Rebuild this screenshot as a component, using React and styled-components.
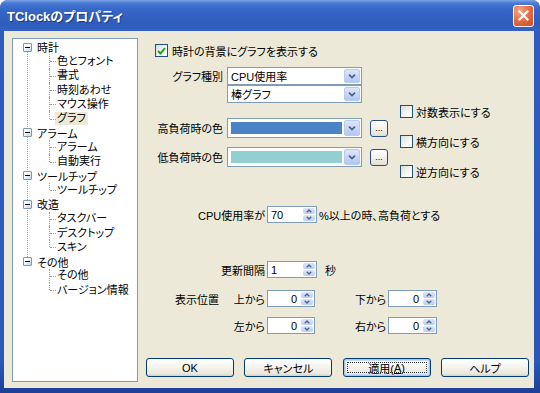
import styled, { createGlobalStyle } from "styled-components"

const GlobalStyle = createGlobalStyle`
  html, body { margin: 0; padding: 0; background: #fff; }
  body {
    font-family: "Liberation Sans", "Noto Sans CJK JP", sans-serif;
    font-size: 11px;
    color: #000;
    font-feature-settings: "palt";
  }
  * { box-sizing: border-box; }
`

const tree = [
  { label: "時計", children: ["色とフォント", "書式", "時刻あわせ", "マウス操作", "グラフ"] },
  { label: "アラーム", children: ["アラーム", "自動実行"] },
  { label: "ツールチップ", children: ["ツールチップ"] },
  { label: "改造", children: ["タスクバー", "デスクトップ", "スキン"] },
  { label: "その他", children: ["その他", "バージョン情報"] },
]

const Chevron = () => (
  <svg width="8" height="5" viewBox="0 0 8 5">
    <path d="M1 0.6 L4 3.6 L7 0.6" fill="none" stroke="#4d6185" strokeWidth="1.7" />
  </svg>
)

const SpinArrow = ({ up }) => (
  <svg width="6" height="4" viewBox="0 0 6 4">
    <path d={up ? "M0.8 3.3 L3 1 L5.2 3.3" : "M0.8 0.7 L3 3 L5.2 0.7"} fill="none" stroke="#4d6185" strokeWidth="1.3" />
  </svg>
)

export default function App() {
  return (
    <>
      <GlobalStyle />
      <Window>
        <TitleBar>
          <Title>TClockのプロパティ</Title>
          <CloseButton>
            <svg width="11" height="11" viewBox="0 0 11 11">
              <path d="M1.5 1.5 L9.5 9.5 M9.5 1.5 L1.5 9.5" stroke="#fff" strokeWidth="2.2" strokeLinecap="square" />
            </svg>
          </CloseButton>
        </TitleBar>
        <Body>
          <TreePanel>
            {tree.map((g, gi) => (
              <TreeGroup key={g.label + gi} $last={gi === tree.length - 1}>
                <ParentRow>
                  <Expander />
                  <span>{g.label}</span>
                </ParentRow>
                {g.children.map((c, ci) => (
                  <ChildRow key={c + ci} $last={ci === g.children.length - 1}>
                    <ItemLabel $selected={c === "グラフ"}>{c}</ItemLabel>
                  </ChildRow>
                ))}
              </TreeGroup>
            ))}
          </TreePanel>

          <Main>
            <CheckRow>
              <CheckBox $checked>
                <svg width="9" height="8" viewBox="0 0 9 8">
                  <path d="M1 4 L3.5 6.5 L8 1.2" fill="none" stroke="#21a121" strokeWidth="2" />
                </svg>
              </CheckBox>
              <span>時計の背景にグラフを表示する</span>
            </CheckRow>

            <FieldArea>
              <FieldGrid>
                <FieldRow $h={18} $mt={0}>
                  <FieldLabel>グラフ種別</FieldLabel>
                  <Combo>
                    <ComboText>CPU使用率</ComboText>
                    <ComboButton><Chevron /></ComboButton>
                  </Combo>
                </FieldRow>
                <FieldRow $h={18} $mt={0}>
                  <FieldLabel />
                  <Combo>
                    <ComboText>棒グラフ</ComboText>
                    <ComboButton><Chevron /></ComboButton>
                  </Combo>
                </FieldRow>
                <FieldRow $h={20} $mt={15}>
                  <FieldLabel>高負荷時の色</FieldLabel>
                  <Combo>
                    <Swatch $color="#4a84c6" />
                    <ComboButton><Chevron /></ComboButton>
                  </Combo>
                  <DotsButton>...</DotsButton>
                </FieldRow>
                <FieldRow $h={20} $mt={9}>
                  <FieldLabel>低負荷時の色</FieldLabel>
                  <Combo>
                    <Swatch $color="#93cfd1" />
                    <ComboButton><Chevron /></ComboButton>
                  </Combo>
                  <DotsButton>...</DotsButton>
                </FieldRow>
              </FieldGrid>

              <SideChecks>
                {["対数表示にする", "横方向にする", "逆方向にする"].map((t) => (
                  <SideCheck key={t}>
                    <CheckBox />
                    <span>{t}</span>
                  </SideCheck>
                ))}
              </SideChecks>
            </FieldArea>

            <SpinRow $mt={28}>
              <SpinLabel>CPU使用率が</SpinLabel>
              <Spin $w={50}>
                <SpinValue>70</SpinValue>
                <SpinButtons>
                  <SpinHalf><SpinArrow up /></SpinHalf>
                  <SpinHalf><SpinArrow /></SpinHalf>
                </SpinButtons>
              </Spin>
              <Suffix $ml={2}>%以上の時、高負荷とする</Suffix>
            </SpinRow>

            <SpinRow $mt={38}>
              <SpinLabel>更新間隔</SpinLabel>
              <Spin $w={50}>
                <SpinValue>1</SpinValue>
                <SpinButtons>
                  <SpinHalf><SpinArrow up /></SpinHalf>
                  <SpinHalf><SpinArrow /></SpinHalf>
                </SpinButtons>
              </Spin>
              <Suffix $ml={8}>秒</Suffix>
            </SpinRow>

            <PositionGrid>
              <GroupLabel>表示位置</GroupLabel>
              <PosLabel>上から</PosLabel>
              <PosSpin />
              <span />
              <PosLabel>下から</PosLabel>
              <PosSpin $w={49} />
              <span />
              <PosLabel>左から</PosLabel>
              <PosSpin />
              <span />
              <PosLabel>右から</PosLabel>
              <PosSpin $w={49} />
            </PositionGrid>

            <ButtonBar>
              <PushButton>OK</PushButton>
              <PushButton>キャンセル</PushButton>
              <PushButton $focused>適用(<u>A</u>)</PushButton>
              <PushButton>ヘルプ</PushButton>
            </ButtonBar>
          </Main>
        </Body>
      </Window>
    </>
  )
}

function PosSpin({ $w = 48 }) {
  return (
    <Spin $w={$w}>
      <SpinValue $right>0</SpinValue>
      <SpinButtons>
        <SpinHalf><SpinArrow up /></SpinHalf>
        <SpinHalf><SpinArrow /></SpinHalf>
      </SpinButtons>
    </Spin>
  )
}

const Window = styled.div`
  width: 540px;
  height: 393px;
  display: flex;
  flex-direction: column;
  background: linear-gradient(to bottom, #2f5ec0, #2b57b7 92%, #1d3f96);
  border-radius: 8px 8px 0 0;
  overflow: hidden;
`

const TitleBar = styled.div`
  flex: none;
  height: 31px;
  display: flex;
  align-items: center;
  justify-content: space-between;
  padding: 0 6px 0 7px;
  background: linear-gradient(to bottom, #7ea4e6 0%, #4a7ad5 10%, #3666c7 30%, #2f5dbe 75%, #3461c2 100%);
`

const Title = styled.span`
  color: #fff;
  font-weight: bold;
  font-size: 13px;
  text-shadow: 1px 1px 0 #1a3a82;
`

const CloseButton = styled.div`
  width: 21px;
  height: 22px;
  border: 1px solid #fff;
  border-radius: 3px;
  background: radial-gradient(circle at 30% 25%, #f3a888, #e2663f 55%, #cc4a22);
  display: flex;
  align-items: center;
  justify-content: center;
`

const Body = styled.div`
  flex: 1;
  margin: 0 6px 5px 4px;
  background: #ece9d8;
  display: flex;
  gap: 8px;
  padding: 7px 5px 6px 8px;
`

const TreePanel = styled.div`
  flex: none;
  width: 126px;
  background: #fff;
  border: 1px solid #7f9db9;
  padding-top: 1px;
`

const TreeGroup = styled.div`
  position: relative;

  &::before {
    content: "";
    display: ${(p) => (p.$last ? "none" : "block")};
    position: absolute;
    left: 14px;
    top: 7px;
    bottom: -7px;
    border-left: 1px dotted #a79f92;
  }
`

const ParentRow = styled.div`
  height: 14.3px;
  display: flex;
  align-items: center;
  white-space: nowrap;
`

const Expander = styled.div`
  position: relative;
  z-index: 1;
  width: 9px;
  height: 9px;
  margin: 0 5px 0 10px;
  border: 1px solid #7a98af;
  border-radius: 1px;
  background: linear-gradient(135deg, #ffffff 30%, #c6d3e2);

  &::after {
    content: "";
    position: absolute;
    left: 1px;
    right: 1px;
    top: 3px;
    height: 1px;
    background: #000;
  }
`

const ChildRow = styled.div`
  position: relative;
  height: 14.3px;
  padding-left: 44px;
  display: flex;
  align-items: center;
  white-space: nowrap;

  &::before {
    content: "";
    position: absolute;
    left: 36px;
    top: 0;
    height: ${(p) => (p.$last ? "50%" : "100%")};
    border-left: 1px dotted #a79f92;
  }

  &::after {
    content: "";
    position: absolute;
    left: 37px;
    width: 6px;
    top: 50%;
    border-top: 1px dotted #a79f92;
  }
`

const ItemLabel = styled.span`
  padding: 0 2px;
  margin-left: -2px;
  line-height: 13px;
  background: ${(p) => (p.$selected ? "#ece9d8" : "transparent")};
`

const Main = styled.div`
  flex: 1;
  display: flex;
  flex-direction: column;
  white-space: nowrap;
`

const CheckRow = styled.div`
  margin-top: 6px;
  padding-left: 9px;
  height: 13px;
  display: flex;
  align-items: center;
  gap: 4px;
`

const CheckBox = styled.div`
  flex: none;
  width: 13px;
  height: 13px;
  border: 1px solid #1c5180;
  background: linear-gradient(135deg, #dcdcd7, #ffffff 80%);
  display: flex;
  align-items: center;
  justify-content: center;
`

const FieldArea = styled.div`
  margin-top: 10px;
  display: flex;
`

const FieldGrid = styled.div`
  display: flex;
  flex-direction: column;
`

const FieldRow = styled.div`
  height: ${(p) => p.$h}px;
  margin-top: ${(p) => p.$mt}px;
  display: flex;
  align-items: stretch;
`

const FieldLabel = styled.div`
  width: 81px;
  padding-right: 4px;
  text-align: right;
  display: flex;
  align-items: center;
  justify-content: flex-end;
`

const Combo = styled.div`
  width: 135px;
  background: #fff;
  border: 1px solid #7f9db9;
  padding: 1px;
  display: flex;
  gap: 2px;
`

const ComboText = styled.div`
  flex: 1;
  padding-left: 2px;
  display: flex;
  align-items: center;
`

const ComboButton = styled.div`
  width: 16px;
  border: 1px solid #b9caf1;
  border-radius: 2px;
  background: linear-gradient(to bottom, #dde6fb, #c3d3f8 60%, #b4c7f2);
  display: flex;
  align-items: center;
  justify-content: center;
`

const Swatch = styled.div`
  flex: 1;
  margin: 2px 0 2px 2px;
  background: ${(p) => p.$color};
`

const DotsButton = styled.div`
  align-self: center;
  width: 18px;
  height: 17px;
  margin-left: 8px;
  border: 1px solid #2a4f86;
  border-radius: 3px;
  background: linear-gradient(to bottom, #ffffff, #f3f2ec 50%, #e2ded1);
  font-size: 9px;
  line-height: 9px;
  display: flex;
  align-items: flex-end;
  justify-content: center;
  padding-bottom: 3px;
`

const SideChecks = styled.div`
  margin-left: 12px;
  padding-top: 38px;
  display: flex;
  flex-direction: column;
  gap: 17px;
`

const SideCheck = styled.div`
  height: 13px;
  display: flex;
  align-items: center;
  gap: 3px;
`

const SpinRow = styled.div`
  margin-top: ${(p) => p.$mt}px;
  height: 17px;
  display: flex;
  align-items: center;
`

const SpinLabel = styled.div`
  width: 121px;
  padding-right: 2px;
  text-align: right;
`

const Spin = styled.div`
  width: ${(p) => p.$w}px;
  height: 17px;
  background: #fff;
  border: 1px solid #7f9db9;
  display: flex;
`

const SpinValue = styled.div`
  flex: 1;
  padding: 0 3px;
  display: flex;
  align-items: center;
  justify-content: ${(p) => (p.$right ? "flex-end" : "flex-start")};
`

const SpinButtons = styled.div`
  width: 14px;
  padding: 1px;
  display: flex;
  flex-direction: column;
  gap: 1px;
`

const SpinHalf = styled.div`
  flex: 1;
  border-radius: 2px;
  background: linear-gradient(to bottom, #dbe5fb, #bdcef5);
  display: flex;
  align-items: center;
  justify-content: center;
`

const Suffix = styled.span`
  margin-left: ${(p) => p.$ml}px;
`

const PositionGrid = styled.div`
  margin-top: 12px;
  display: grid;
  grid-template-columns: 86px 35px 48px 40px 33px 49px;
  grid-auto-rows: 17px;
  row-gap: 10px;
  align-items: center;
`

const GroupLabel = styled.span`
  padding-left: 29px;
`

const PosLabel = styled.span`
  padding-right: 2px;
  text-align: right;
`

const ButtonBar = styled.div`
  margin-top: auto;
  margin-bottom: 5px;
  display: flex;
  justify-content: space-between;
`

const PushButton = styled.div`
  position: relative;
  width: 88px;
  height: 19px;
  border: 1px solid #003c74;
  border-radius: 3px;
  background: linear-gradient(to bottom, #ffffff, #f5f4ef 45%, #ebe8dc 85%, #d8d2c4);
  box-shadow: ${(p) => (p.$focused ? "inset 0 0 0 1px #aac6ef, inset 0 0 0 2px #cddcf6" : "none")};
  display: flex;
  align-items: center;
  justify-content: center;

  &::after {
    content: "";
    display: ${(p) => (p.$focused ? "block" : "none")};
    position: absolute;
    inset: 3px;
    border: 1px dotted #333;
  }
`
